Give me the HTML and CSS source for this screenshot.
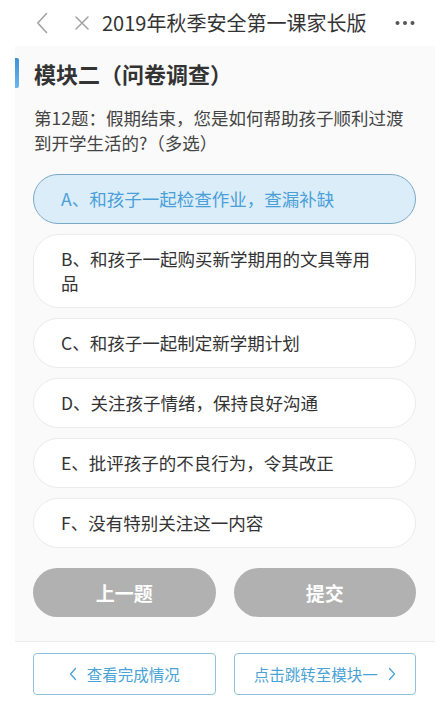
FILE: index.html
```html
<!DOCTYPE html>
<html lang="zh-CN">
<head>
<meta charset="utf-8">
<title>2019年秋季安全第一课家长版</title>
<link rel="stylesheet" href="styles.css">
</head>
<body>
<header class="topbar">
  <svg class="ic-back" width="12" height="22" viewBox="0 0 12 22"><path d="M10.5 1.5 L1.8 11 L10.5 20.5" fill="none" stroke="#a2a2a2" stroke-width="1.6" stroke-linecap="round" stroke-linejoin="round"/></svg>
  <svg class="ic-close" width="14" height="14" viewBox="0 0 14 14"><path d="M1 1 L13 13 M13 1 L1 13" fill="none" stroke="#a2a2a2" stroke-width="1.5" stroke-linecap="round"/></svg>
  <span class="topbar-title">2019年秋季安全第一课家长版</span>
  <svg class="ic-more" width="20" height="6" viewBox="0 0 20 6"><circle cx="2.5" cy="3" r="2" fill="#555"/><circle cx="10" cy="3" r="2" fill="#555"/><circle cx="17.5" cy="3" r="2" fill="#555"/></svg>
</header>

<main class="card">
  <div class="section-title">
    <span class="bar"></span>
    <h1>模块二（问卷调查）</h1>
  </div>
  <p class="question">第12题：假期结束，您是如何帮助孩子顺利过渡到开学生活的?（多选）</p>
  <ul class="options">
    <li class="option selected">A、和孩子一起检查作业，查漏补缺</li>
    <li class="option">B、和孩子一起购买新学期用的文具等用品</li>
    <li class="option">C、和孩子一起制定新学期计划</li>
    <li class="option">D、关注孩子情绪，保持良好沟通</li>
    <li class="option">E、批评孩子的不良行为，令其改正</li>
    <li class="option">F、没有特别关注这一内容</li>
  </ul>
  <div class="actions">
    <button class="pill">上一题</button>
    <button class="pill">提交</button>
  </div>
</main>

<footer class="footer">
  <button class="link-btn">
    <svg width="8" height="14" viewBox="0 0 8 14"><path d="M6.5 1.5 L1.5 7 L6.5 12.5" fill="none" stroke="#4aa3d6" stroke-width="1.3" stroke-linecap="round" stroke-linejoin="round"/></svg>
    <span>查看完成情况</span>
  </button>
  <button class="link-btn">
    <span>点击跳转至模块一</span>
    <svg width="8" height="14" viewBox="0 0 8 14"><path d="M1.5 1.5 L6.5 7 L1.5 12.5" fill="none" stroke="#4aa3d6" stroke-width="1.3" stroke-linecap="round" stroke-linejoin="round"/></svg>
  </button>
</footer>
</body>
</html>
```

FILE: styles.css
```css
* { box-sizing: border-box; }
html, body { margin: 0; padding: 0; }
body {
  width: 440px;
  height: 714px;
  background: #ffffff;
  font-family: "Noto Sans CJK SC", "Noto Sans", sans-serif;
  color: #333;
  overflow: hidden;
}

.topbar {
  height: 46px;
  display: flex;
  align-items: center;
}
.ic-back { margin-left: 36px; flex: none; }
.ic-close { margin-left: 27px; flex: none; }
.topbar-title {
  margin-left: 13px;
  font-size: 20px;
  line-height: 28px;
  color: #333;
}
.ic-more { margin-left: auto; margin-right: 25px; flex: none; }

.card {
  margin: 0 5px 0 15px;
  background: #fafafa;
  padding: 12px 19px 24px 18px;
}

.section-title {
  display: flex;
  align-items: center;
  height: 30px;
  margin-left: -18px;
}
.bar {
  width: 4px;
  height: 30px;
  border-radius: 0 2px 2px 0;
  background: linear-gradient(#3b90da, #6ab7ea);
}
.section-title h1 {
  margin: 0 0 0 15px;
  font-size: 22px;
  line-height: 30px;
  font-weight: 700;
  color: #333;
}

.question {
  margin: 17px 0 0 1px;
  font-size: 17.5px;
  line-height: 25px;
  color: #444;
}

.options {
  list-style: none;
  margin: 19px 0 0 0;
  padding: 0;
  display: flex;
  flex-direction: column;
  gap: 10px;
}
.option {
  background: #ffffff;
  border: 1px solid #ebebeb;
  border-radius: 26px;
  padding: 12px 30px 12px 27px;
  font-size: 17.5px;
  line-height: 24px;
  color: #333;
}
.option.selected {
  background: #dbedf9;
  border-color: #7aa9c8;
  color: #4a9fd8;
}

.actions {
  margin-top: 20px;
  display: flex;
  gap: 18px;
}
.pill {
  flex: 1;
  height: 49px;
  border: none;
  border-radius: 25px;
  background: #b1b1b1;
  color: #fff;
  font-family: inherit;
  font-size: 19px;
  font-weight: 700;
  padding: 0;
}

.footer {
  margin: 0 5px 0 15px;
  border-top: 1px solid #ececec;
  padding: 11px 19px 0 18px;
  display: flex;
  gap: 18px;
}
.link-btn {
  flex: 1;
  height: 42px;
  border: 1px solid #8fc2da;
  border-radius: 4px;
  background: #fff;
  color: #4aa3d6;
  font-family: inherit;
  font-size: 15.5px;
  display: flex;
  align-items: center;
  justify-content: center;
  gap: 10px;
  padding: 0;
}
```
